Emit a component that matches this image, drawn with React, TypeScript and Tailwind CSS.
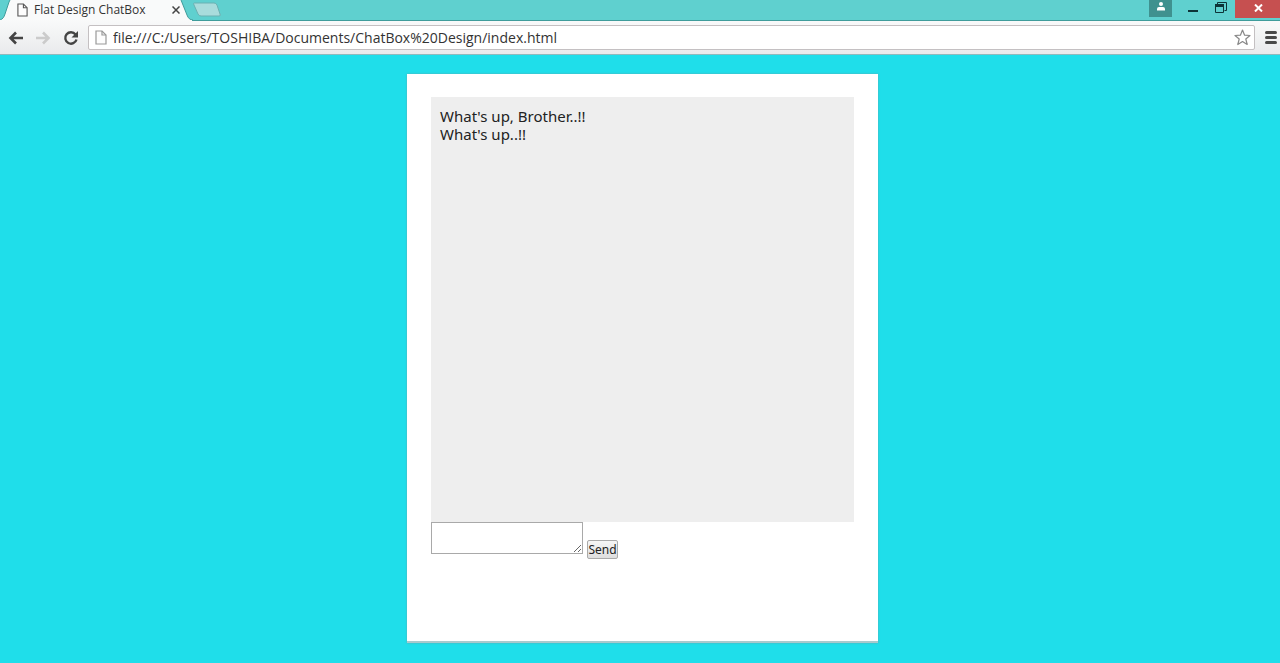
import React, { useState } from "react";

function PageIcon({ className }: { className: string }) {
  return (
    <svg viewBox="0 0 12 15" fill="#fdfdfd" strokeWidth="1.2" className={className} aria-hidden="true">
      <path d="M1 1h6l4 4v9H1z" />
      <path d="M7 1v4h4" fill="none" />
    </svg>
  );
}

function TabStrip() {
  return (
    <div className="flex h-5 items-start bg-[#5fd0cf]">
      <div className="relative flex h-5 w-[193px] shrink-0 items-center pl-[17px] pr-[9px]">
        <svg viewBox="0 0 193 20" className="absolute inset-0 h-5 w-[193px]" aria-hidden="true">
          <path d="M0 20C3 19 4 17 5 14L9 2L10 0H181L187 15C188 18 190 20 193 20Z" fill="#f9fafa" />
          <path d="M0 20C3 19 4 17 5 14L9 2L10 0M181 0L187 15C188 18 190 20 193 20" fill="none" stroke="#3f9c9b" />
        </svg>
        <PageIcon className="relative h-[14px] w-[11px] stroke-[#555]" />
        <span className="relative ml-1.5 flex-1 whitespace-nowrap text-xs text-[#333]">Flat Design ChatBox</span>
        <button type="button" aria-label="Close tab" className="relative flex h-4 w-4 items-center justify-center">
          <svg viewBox="0 0 8 8" className="h-2 w-2" stroke="#444" strokeWidth="1.5" aria-hidden="true">
            <path d="M.5.5l7 7M7.5.5l-7 7" />
          </svg>
        </button>
      </div>
      <button type="button" aria-label="New tab" className="mt-0.5">
        <svg viewBox="0 0 30 15" className="h-[15px] w-[30px]" aria-hidden="true">
          <path d="M1 1H21Q23 1 24 3L27 12Q28 14 26 14H8Q6 14 5 12L1 3Q0 1 1 1Z" fill="#a9dcdc" stroke="#6bb1b2" />
        </svg>
      </button>
      <div className="ml-auto flex items-start">
        <button type="button" aria-label="Profile" className="flex h-[17px] w-[23px] justify-center bg-[#3f918f] pt-0.5">
          <svg viewBox="0 0 10 9" className="h-[9px] w-[10px]" fill="#fff" aria-hidden="true">
            <circle cx="5" cy="2" r="2" />
            <path d="M1 8.500V7Q1 5 3 5H7Q9 5 9 7V8.500Z" />
          </svg>
        </button>
        <button type="button" aria-label="Minimize" className="flex h-[17px] w-[41px] items-start justify-center pt-2.5">
          <span className="h-0.5 w-2.5 bg-[#0d3438]" />
        </button>
        <button type="button" aria-label="Restore" className="flex h-[17px] w-[22px] justify-start pl-0.5 pt-0.5">
          <svg viewBox="0 0 12 11" className="h-[11px] w-3" fill="none" stroke="#0d3438" aria-hidden="true">
            <path d="M2.500 2V.5h9v8h-2" />
            <path d="M.5 2.500h8v8h-8z" />
            <path d="M0 3.500h9" strokeWidth="3" />
          </svg>
        </button>
        <button type="button" aria-label="Close" className="flex h-[18px] w-[45px] justify-center bg-[#c65050] pl-0.5 pt-1">
          <svg viewBox="0 0 9 8" className="h-2 w-[9px]" stroke="#fff" strokeWidth="2" aria-hidden="true">
            <path d="M1 .5l7 7M8 .5l-7 7" />
          </svg>
        </button>
      </div>
    </div>
  );
}

function Toolbar() {
  const [url, setUrl] = useState("file:///C:/Users/TOSHIBA/Documents/ChatBox%20Design/index.html");
  return (
    <div className="relative flex h-[35px] items-center border-b border-[#8fb9bd] bg-linear-to-b from-[#f9fafa] to-[#e9eaec] pl-2 pr-[3px] pt-px">
      <span className="absolute left-[192px] right-0 top-0 h-px bg-[#3f9c9b]" />
      <button type="button" aria-label="Back" className="flex h-5 w-[27px] items-center">
        <svg viewBox="0 0 16 14" className="h-[14px] w-4" fill="none" stroke="#444" strokeWidth="2.600" aria-hidden="true">
          <path d="M15 7H3M8 1.500L2.500 7L8 12.500" />
        </svg>
      </button>
      <button type="button" aria-label="Forward" className="flex h-5 w-7 items-center">
        <svg viewBox="0 0 16 14" className="h-[14px] w-4" fill="none" stroke="#cbcbcb" strokeWidth="2.600" aria-hidden="true">
          <path d="M1 7h12M8 1.500L13.500 7L8 12.500" />
        </svg>
      </button>
      <button type="button" aria-label="Reload" className="flex h-5 w-[25px] items-center">
        <svg viewBox="0 0 16 16" className="h-4 w-4" aria-hidden="true">
          <path d="M12.500 4.500A5.700 5.700 0 1 0 13.500 9.500" fill="none" stroke="#444" strokeWidth="2.400" />
          <path d="M15 1v6.500H8.500z" fill="#444" />
        </svg>
      </button>
      <div className="flex h-[25px] min-w-0 flex-1 items-center rounded-xs border border-[#c4c0c2] bg-white pl-1.5 pr-[3px]">
        <PageIcon className="h-[15px] w-3 shrink-0 stroke-[#999]" />
        <input
          aria-label="Address"
          value={url}
          onChange={(e) => setUrl(e.target.value)}
          className="ml-1.5 h-5 min-w-0 flex-1 bg-transparent text-sm text-[#333] outline-none"
        />
        <button type="button" aria-label="Bookmark this page">
          <svg viewBox="0 0 17 17" className="h-[17px] w-[17px]" fill="#fff" stroke="#888" strokeWidth="1.200" strokeLinejoin="round" aria-hidden="true">
            <path d="M8.500 1L10.600 6.200L16 6.500L11.800 10L13.200 15.500L8.500 12.500L3.800 15.500L5.200 10L1 6.500L6.400 6.200Z" />
          </svg>
        </button>
      </div>
      <button type="button" aria-label="Menu" className="ml-2.5 flex h-5 w-3 flex-col justify-center gap-0.5">
        <span className="h-[3px] w-3 rounded-xs bg-[#494949]" />
        <span className="h-[3px] w-3 rounded-xs bg-[#494949]" />
        <span className="h-[3px] w-3 rounded-xs bg-[#494949]" />
      </button>
    </div>
  );
}

export default function App() {
  const [messages, setMessages] = useState(["What's up, Brother..!!", "What's up..!!"]);
  const [draft, setDraft] = useState("");

  const send = (e: React.FormEvent) => {
    e.preventDefault();
    if (!draft.trim()) return;
    setMessages([...messages, draft]);
    setDraft("");
  };

  return (
    <div className="flex min-h-screen flex-col bg-[#1fdeea] font-['Open_Sans','Noto_Sans',sans-serif]">
      <header>
        <TabStrip />
        <Toolbar />
      </header>
      <main className="flex flex-1 justify-center pb-5 pl-[5px] pt-[19px]">
        <section className="w-[471px] border-b-2 border-[#a9c9cd] bg-white px-6 pb-20 pt-[23px] shadow-[0_0_2px_#5fa9ae]">
          <div role="log" className="h-[425px] overflow-y-auto bg-[#eee] px-[9px] py-2.5 font-['Noto_Sans',sans-serif] text-[15px] leading-[18px] text-[#222]">
            {messages.map((message, i) => (
              <p key={i}>{message}</p>
            ))}
          </div>
          <form onSubmit={send} className="flex items-end gap-1">
            <textarea
              aria-label="Message"
              value={draft}
              onChange={(e) => setDraft(e.target.value)}
              className="mb-[5px] h-8 w-[152px] resize border border-[#a9a9a9] bg-white p-0.5 text-[13px] outline-none"
            />
            <button type="submit" className="h-[19px] w-[31px] rounded-xs border border-[#aaa] bg-linear-to-b from-[#f6f6f6] to-[#dedede] font-['Noto_Sans',sans-serif] text-xs leading-4 text-[#222]">
              Send
            </button>
          </form>
        </section>
      </main>
    </div>
  );
}
